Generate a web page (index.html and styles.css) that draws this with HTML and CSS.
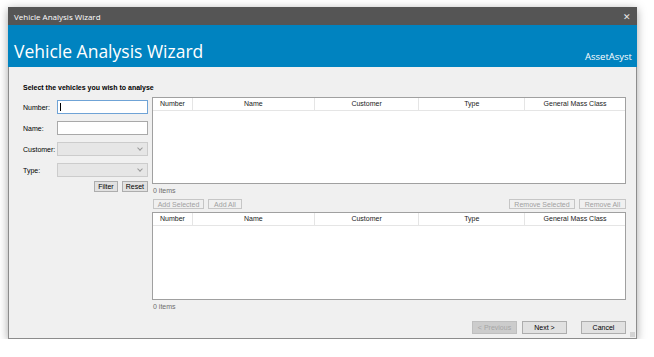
FILE: index.html
```html
<!DOCTYPE html>
<html lang="en">

<head>
    <meta charset="UTF-8">
    <meta name="viewport" content="width=device-width, initial-scale=1.0">
    <title>Vehicle Analysis Wizard</title>
    <link rel="stylesheet" href="styles.css">
</head>

<body>
    <div class="window">
        <div class="titlebar">
            <span>Vehicle Analysis Wizard</span>
            <span class="close">&#x2715;</span>
        </div>

        <div class="banner">
            <h1>Vehicle Analysis Wizard</h1>
            <span class="brand">AssetAsyst</span>
        </div>

        <div class="content">
            <div class="heading">Select the vehicles you wish to analyse</div>

            <div class="main">
                <div class="filters">
                    <div class="field">
                        <label>Number:</label>
                        <div class="textbox focused"><span class="caret"></span></div>
                    </div>
                    <div class="field">
                        <label>Name:</label>
                        <div class="textbox"></div>
                    </div>
                    <div class="field">
                        <label>Customer:</label>
                        <div class="combo"><span class="chevron"></span></div>
                    </div>
                    <div class="field">
                        <label>Type:</label>
                        <div class="combo"><span class="chevron"></span></div>
                    </div>
                    <div class="filter-buttons">
                        <button class="btn">Filter</button>
                        <button class="btn">Reset</button>
                    </div>
                </div>

                <div class="lists">
                    <div class="grid">
                        <div class="grid-head">
                            <span class="col-number">Number</span>
                            <span class="col-name">Name</span>
                            <span class="col-customer">Customer</span>
                            <span class="col-type">Type</span>
                            <span class="col-mass">General Mass Class</span>
                        </div>
                    </div>
                    <div class="count">0 items</div>

                    <div class="move-buttons">
                        <button class="btn disabled add-selected">Add Selected</button>
                        <button class="btn disabled add-all">Add All</button>
                        <span class="spacer"></span>
                        <button class="btn disabled remove-selected">Remove Selected</button>
                        <button class="btn disabled remove-all">Remove All</button>
                    </div>

                    <div class="grid lower">
                        <div class="grid-head">
                            <span class="col-number">Number</span>
                            <span class="col-name">Name</span>
                            <span class="col-customer">Customer</span>
                            <span class="col-type">Type</span>
                            <span class="col-mass">General Mass Class</span>
                        </div>
                    </div>
                    <div class="count">0 items</div>
                </div>
            </div>

            <div class="footer">
                <button class="btn nav previous">&lt; Previous</button>
                <button class="btn nav next">Next &gt;</button>
                <button class="btn nav cancel">Cancel</button>
            </div>
        </div>
        <div class="grip"></div>
    </div>
</body>

</html>
```

FILE: styles.css
```css
body {
    margin: 0;
    background: #ffffff;
    font-family: 'Liberation Sans', Arial, sans-serif;
    font-size: 7px;
    color: #000000;
}

.window {
    position: relative;
    margin: 7px 0 0 8px;
    width: 629px;
    height: 332px;
    box-sizing: border-box;
    background: #f0f0f0;
    border: 1px solid #8c8c8c;
    border-top: none;
    box-shadow: 0 2px 9px rgba(0, 0, 0, 0.35);
}

.titlebar {
    height: 18px;
    margin: 0 -1px;
    background: #555555;
    color: #ffffff;
    font-family: 'Open Sans', sans-serif;
    font-size: 8px;
    display: flex;
    align-items: center;
    justify-content: space-between;
    padding: 0 6px 0 6px;
}

.close {
    font-size: 9px;
    color: #e8e8e8;
}

.banner {
    height: 42px;
    box-sizing: border-box;
    margin: 0 -1px;
    background: #0083c0;
    color: #ffffff;
    display: flex;
    align-items: flex-end;
    justify-content: space-between;
    padding: 0 5px 4px 6px;
}

.banner h1 {
    margin: 0 0 1px 0;
    font-family: 'Open Sans', sans-serif;
    font-weight: normal;
    font-size: 17.5px;
    line-height: 22px;
}

.brand {
    font-family: 'Open Sans', sans-serif;
    font-size: 9.5px;
    line-height: 12px;
}

.content {
    padding: 16px 10px 0 14px;
}

.heading {
    font-weight: bold;
    line-height: 10px;
    height: 14px;
}

.main {
    display: flex;
    gap: 4px;
}

.filters {
    width: 125px;
    padding-top: 3px;
}

.field {
    display: flex;
    align-items: center;
    height: 14px;
    margin-bottom: 7px;
}

.field label {
    width: 34px;
    flex: none;
}

.textbox {
    width: 91px;
    height: 14px;
    box-sizing: border-box;
    background: #ffffff;
    border: 1px solid #a9a9a9;
    position: relative;
}

.textbox.focused {
    border-color: #6fa3d6;
}

.caret {
    position: absolute;
    left: 2px;
    top: 2px;
    width: 1px;
    height: 8px;
    background: #000000;
}

.combo {
    width: 91px;
    height: 14px;
    box-sizing: border-box;
    background: #e6e6e6;
    border: 1px solid #cccccc;
    position: relative;
}

.chevron {
    position: absolute;
    right: 5px;
    top: 3px;
    width: 3px;
    height: 3px;
    border-right: 1px solid #9a9a9a;
    border-bottom: 1px solid #9a9a9a;
    transform: rotate(45deg);
}

.filter-buttons {
    display: flex;
    justify-content: flex-end;
    gap: 4px;
    margin-top: -3px;
}

.btn {
    font-family: 'Liberation Sans', Arial, sans-serif;
    font-size: 7px;
    height: 11px;
    padding: 0 3px;
    line-height: 9px;
    background: #e1e1e1;
    border: 1px solid #adadad;
    color: #000000;
}

.btn.disabled {
    background: #f0f0f0;
    border-color: #c6c6c6;
    color: #a0a0a0;
}

.lists {
    width: 474px;
}

.grid {
    height: 87px;
    box-sizing: border-box;
    background: #ffffff;
    border: 1px solid #a0a0a0;
}

.grid.lower {
    height: 88px;
}

.grid-head {
    display: flex;
    height: 12px;
    line-height: 12px;
    border-bottom: 1px solid #e5e5e5;
    color: #1a1a1a;
}

.grid-head span {
    text-align: center;
    border-right: 1px solid #e5e5e5;
}

.col-number { width: 39px; }
.col-name { width: 121px; }
.col-customer { width: 104px; }
.col-type { width: 105px; }
.col-mass { width: 100px; border-right: none !important; }

.count {
    color: #6d6d6d;
    height: 15px;
    line-height: 13px;
    padding-left: 1px;
}

.move-buttons {
    display: flex;
    gap: 4px;
    height: 13px;
    padding-left: 1px;
}

.move-buttons .btn {
    height: 10px;
}

.add-selected { width: 51px; }
.add-all { width: 34px; }
.remove-selected { width: 66px; }
.remove-all { width: 47px; }

.spacer {
    flex: 1;
}

.footer {
    display: flex;
    justify-content: flex-end;
    margin-top: 6px;
}

.btn.nav {
    height: 13px;
    width: 45px;
}

.previous {
    background: #cccccc !important;
    border-color: #bfbfbf !important;
    color: #a6a6a6 !important;
}

.next {
    margin-left: 5px;
}

.cancel {
    margin-left: 14px;
}

.grip {
    position: absolute;
    right: 1px;
    bottom: 1px;
    width: 5px;
    height: 5px;
    background: radial-gradient(circle, #b0b0b0 0.6px, transparent 0.8px) 0 0 / 2px 2px;
}
```
